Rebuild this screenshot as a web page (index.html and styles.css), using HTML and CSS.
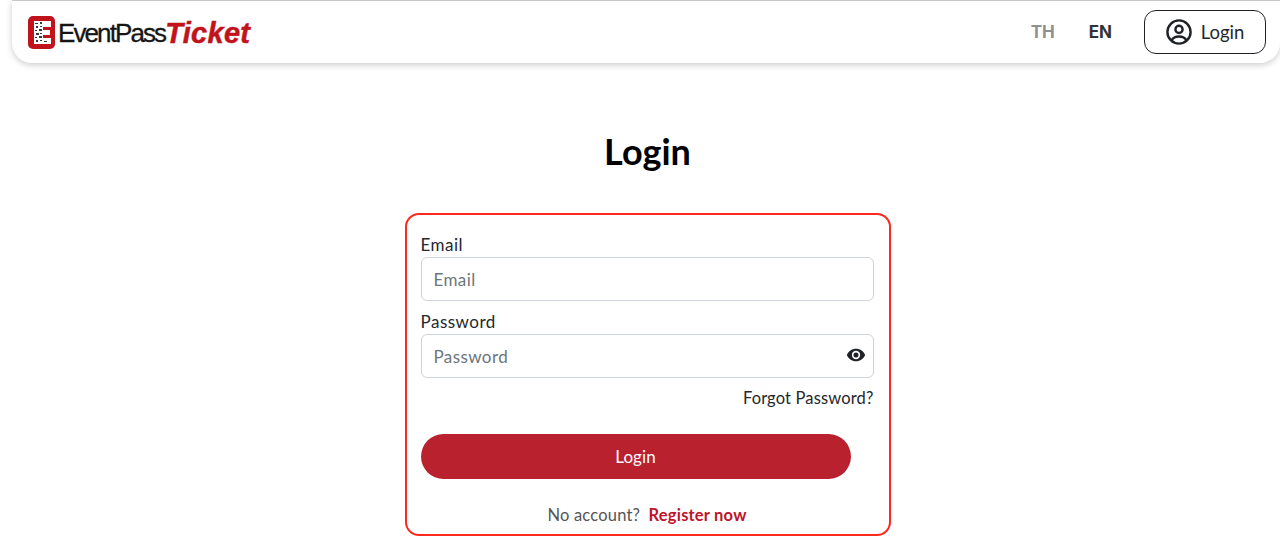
FILE: index.html
```html
<!DOCTYPE html>
<html lang="en">
<head>
  <meta charset="UTF-8" />
  <meta name="viewport" content="width=device-width, initial-scale=1.0"/>
  <title>EventPass Ticket - Login</title>
  <link rel="stylesheet" href="styles.css">
</head>
<body>

  <!-- Header -->
  <header class="navbar">
    <a class="brand" href="#">
      <svg class="brand-icon" viewBox="0 0 27 33" width="27" height="33">
        <rect width="27" height="33" rx="5" fill="#c1131b"/>
        <path d="M6 5h17v6h-8v3h7v5h-7v3h8v6H6z" fill="#fff"/>
        <path d="M7 7h3v1H7zM12 6h2v2h-2zM8 10h2v2H8zM12 10h2v1h-2zM7 14h2v1H7zM11 13h3v2h-3zM8 17h3v2H8zM12 17h2v1h-2zM7 21h2v1H7zM11 20h3v2h-3zM8 24h2v2H8zM12 24h2v1h-2zM16 25h3v1h-3z" fill="#3a3a3a"/>
      </svg>
      <span class="brand-name">EventPass</span><span class="brand-accent">Ticket</span>
    </a>
    <nav class="nav-right">
      <a class="lang lang-off" href="#">TH</a>
      <a class="lang" href="#">EN</a>
      <button class="login-btn">
        <svg viewBox="0 0 26 26" width="26" height="26" fill="none" stroke="#1f2328" stroke-width="2.4">
          <circle cx="13" cy="13" r="11.6"/>
          <circle cx="13" cy="10.4" r="3.6"/>
          <path d="M5.6 21.4c1.4-2.8 4-3.900 7.400-3.900s6 1.100 7.400 3.900"/>
        </svg>
        Login
      </button>
    </nav>
  </header>

  <!-- Main Content -->
  <main class="container">
    <h1>Login</h1>

    <form class="login-card">
      <label class="field-label" for="email">Email</label>
      <input class="field" id="email" type="text" placeholder="Email">

      <label class="field-label label-password" for="password">Password</label>
      <div class="password-wrap">
        <input class="field" id="password" type="password" placeholder="Password">
        <svg class="eye" viewBox="0 0 24 24" width="20" height="20">
          <path fill="#1f2328" d="M12 4.5C7 4.5 2.7 7.6 1 12c1.7 4.4 6 7.5 11 7.500s9.300-3.100 11-7.500c-1.700-4.400-6-7.500-11-7.500zM12 17a5 5 0 1 1 0-10 5 5 0 0 1 0 10zm0-8a3 3 0 1 0 0 6 3 3 0 0 0 0-6z"/>
        </svg>
      </div>

      <a class="forgot" href="#">Forgot Password?</a>

      <button class="submit-btn" type="button">Login</button>

      <p class="register">No account? <a href="#">Register now</a></p>
    </form>
  </main>

</body>
</html>
```

FILE: styles.css
```css
:root {
  --primary: #b9212f;
  --link: #c0142a;
  --text: #24282c;
}

body {
  font-family: 'Lato', sans-serif;
  margin: 0;
  color: var(--text);
  background: #fff;
}

a {
  text-decoration: none;
  color: inherit;
}

.navbar {
  height: 62px;
  margin-left: 12px;
  padding: 0 14px 0 16px;
  display: flex;
  align-items: center;
  justify-content: space-between;
  background: #fff;
  border-top: 1px solid #c9c9c9;
  border-radius: 0 0 20px 20px;
  box-shadow: 0 2px 6px rgba(0, 0, 0, 0.2);
}

.brand {
  display: flex;
  align-items: center;
  font-family: 'Liberation Sans', sans-serif;
  color: #151515;
}

.brand-icon {
  margin-right: 3px;
}

.brand-name {
  font-size: 26px;
  letter-spacing: -1.9px;
  padding-top: 2px;
  -webkit-text-stroke: 0.3px #151515;
}

.brand-accent {
  font-size: 29px;
  font-weight: bold;
  font-style: italic;
  letter-spacing: 0.3px;
  padding-top: 2px;
  color: #c1131b;
  -webkit-text-stroke: 0.5px #c1131b;
}

.nav-right {
  display: flex;
  align-items: center;
}

.lang {
  font-family: 'Inter', sans-serif;
  font-size: 17px;
  font-weight: 700;
  color: #2f3439;
  margin-right: 34px;
}

.lang + .lang {
  margin-right: 32px;
}

.lang-off {
  color: #8f8f8f;
}

.login-btn {
  width: 122px;
  height: 44px;
  display: flex;
  align-items: center;
  justify-content: center;
  gap: 9px;
  font-family: inherit;
  font-size: 18.500px;
  color: var(--text);
  background: #fff;
  border: 1.5px solid #1f2328;
  border-radius: 12px;
}

.container {
  margin-left: 15px;
  display: flex;
  flex-direction: column;
  align-items: center;
}

h1 {
  font-size: 36px;
  font-weight: 700;
  color: #000;
  line-height: 40px;
  margin: 68px 0 42px;
}

.login-card {
  width: 486px;
  height: 323px;
  box-sizing: border-box;
  padding: 19px 15px 0 14px;
  display: flex;
  flex-direction: column;
  border: 2.500px solid #fb2a1e;
  border-radius: 14px;
}

.field-label {
  font-size: 17px;
  letter-spacing: 0.5px;
  line-height: 22px;
  margin-bottom: 1px;
}

.label-password {
  margin-top: 10px;
}

.field {
  width: 100%;
  height: 44px;
  box-sizing: border-box;
  padding: 0 12px;
  font-family: inherit;
  font-size: 17px;
  letter-spacing: 0.4px;
  color: var(--text);
  border: 1px solid #ced4da;
  border-radius: 6px;
  display: block;
}

.field::placeholder {
  color: #6c757d;
  opacity: 1;
}

.password-wrap {
  position: relative;
}

.eye {
  position: absolute;
  top: 11px;
  right: 8px;
}

.forgot {
  align-self: flex-end;
  font-size: 16.500px;
  letter-spacing: 0.15px;
  line-height: 20px;
  margin-top: 10px;
}

.submit-btn {
  width: 430px;
  height: 45px;
  margin-top: 26px;
  font-family: inherit;
  font-size: 17px;
  letter-spacing: 0.1px;
  color: #fff;
  background: var(--primary);
  border: none;
  border-radius: 23px;
}

.register {
  margin: 26px 0 0;
  text-align: center;
  font-size: 16.500px;
  letter-spacing: 0.2px;
  line-height: 20px;
  color: #555;
}

.register a {
  margin-left: 4px;
  font-weight: 700;
  color: var(--link);
}
```
